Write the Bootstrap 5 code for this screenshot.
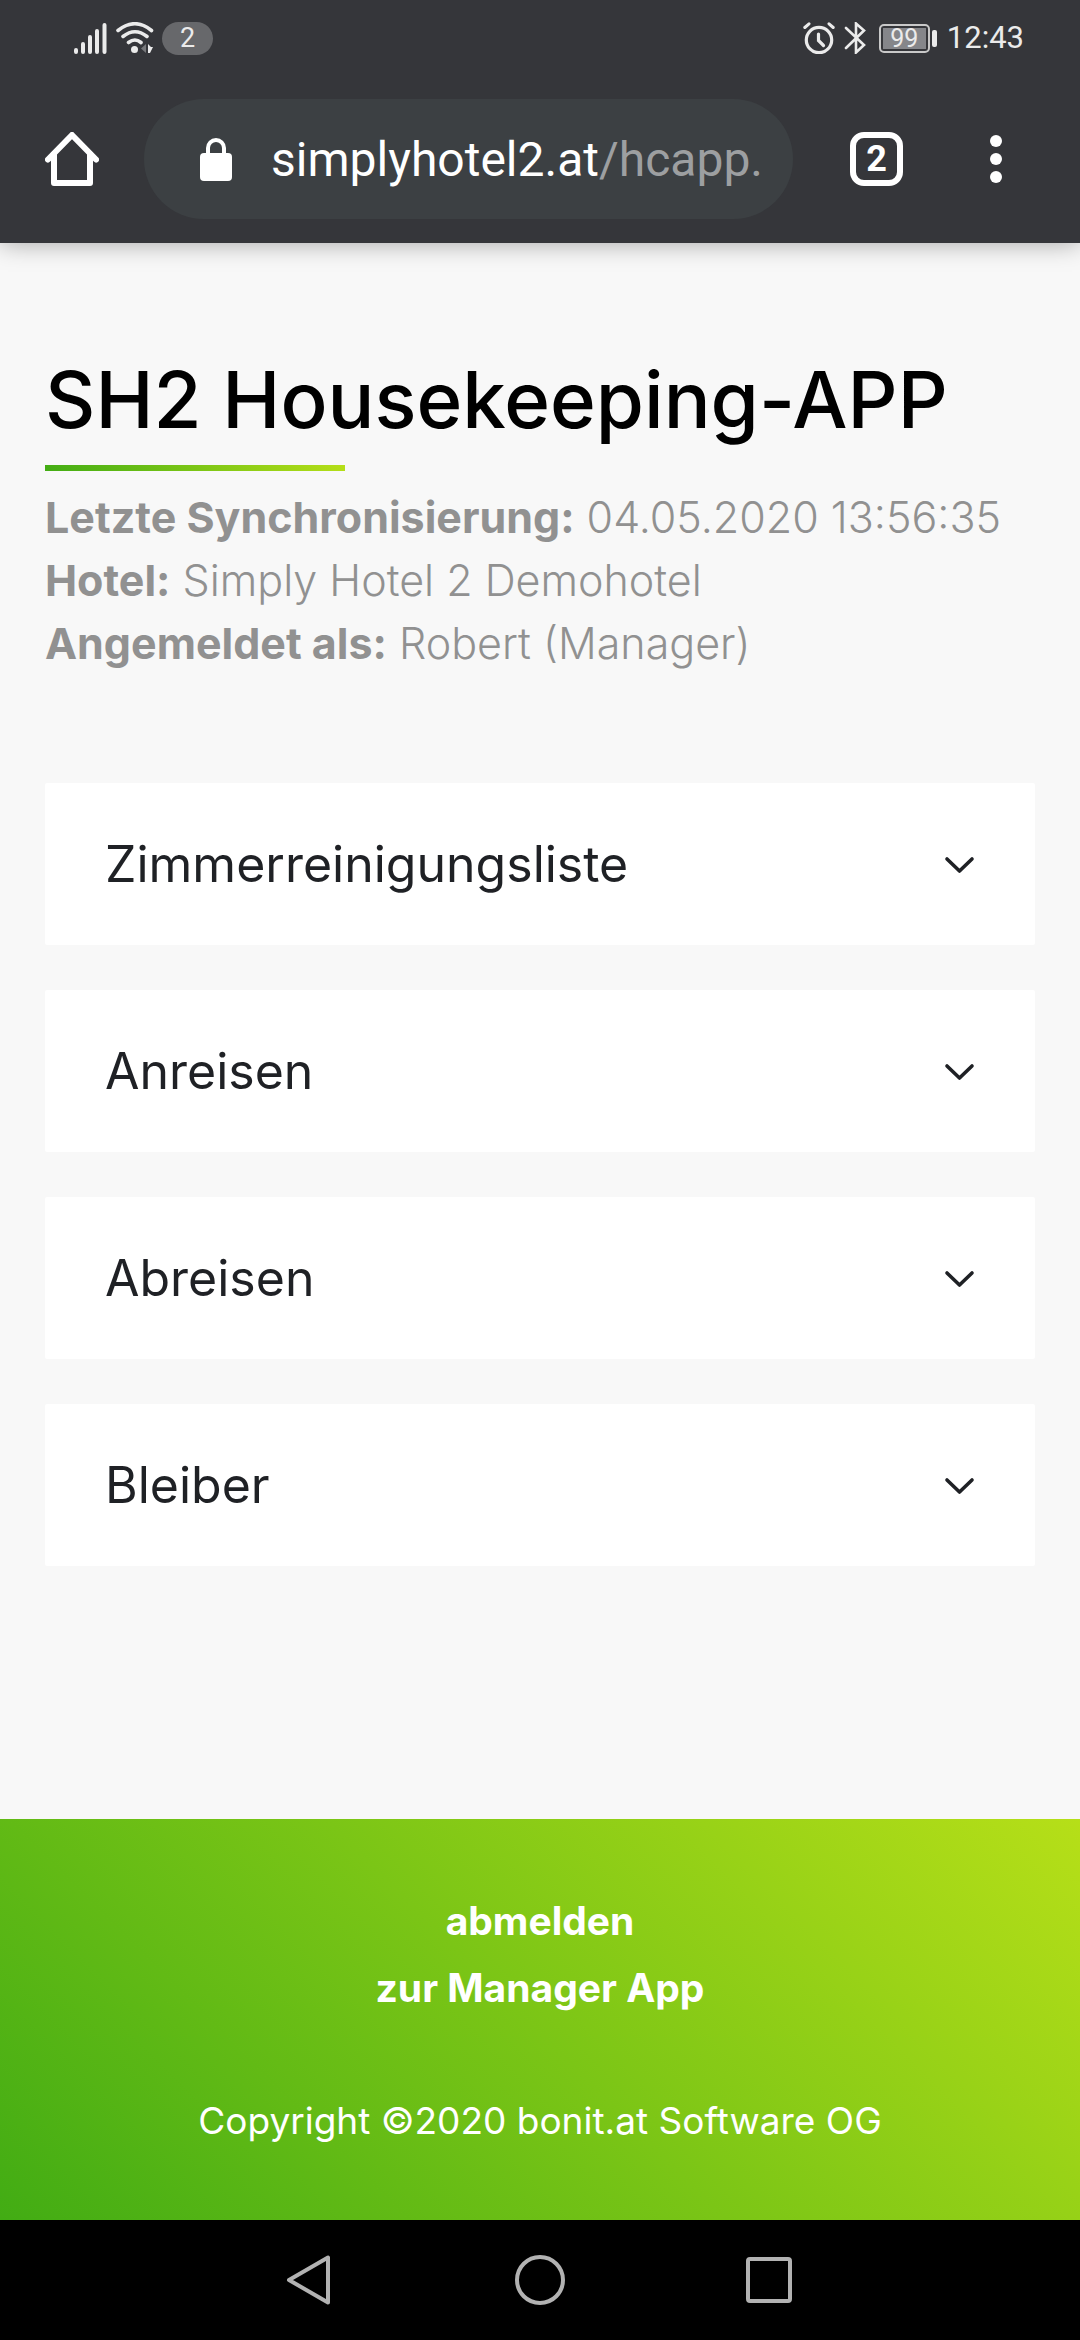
<!DOCTYPE html>
<html lang="de">
<head>
<meta charset="utf-8">
<meta name="viewport" content="width=device-width, initial-scale=1">
<title>SH2 Housekeeping-APP</title>
<link rel="stylesheet" href="https://cdn.jsdelivr.net/npm/bootstrap@5.3.0/dist/css/bootstrap.min.css">
<style>
  body { background: #f8f8f8; font-family: Inter, "Liberation Sans", sans-serif; color: #1f2125; }
  svg { display: block; flex: none; }
  .browser-top { background: #35363a; color: #fff; font-family: Roboto, sans-serif; box-shadow: 0 0 24px rgba(0,0,0,.35); }
  .status-row { height: 76px; padding: 0 56px 0 74px; color: #ebebeb; font-size: 31px; line-height: 32px; }
  .notice-count { width: 51px; height: 33px; line-height: 33px; background: #67686b; font-size: 27px; }
  .battery { width: 51px; height: 29px; border: 2px solid #c9c9c9; border-radius: 5px; padding: 2px; }
  .battery span { background: #85868a; font-size: 25px; line-height: 21px; height: 21px; }
  .battery-tip { width: 5px; height: 17px; background: #ebebeb; border-radius: 2px; margin: 0 10px 0 2px; }
  .tool-row { padding: 23px 45px 24px; }
  .plain-btn { border: 0; background: none; padding: 0; color: inherit; }
  .address { height: 120px; background: #3c4043; font-size: 48px; line-height: 56px; padding: 2px 30px 0 56px; gap: 39px; margin: 0 57px 0 45px; }
  .address .path { color: #9d9fa1; }
  .tab-count { width: 54px; height: 54px; border: 6px solid #fff; border-radius: 14px; font-size: 36px; font-weight: 700; line-height: 42px; }
  .menu-btn { margin-left: 87px; width: 12px; margin-right: 33px; }
  .page { padding: 109px 45px 0; }
  .page-title { font-size: 78px; line-height: 96px; font-weight: 500; color: #000; margin: 0; }
  .title-rule { width: 300px; height: 6px; margin: 17px 0 15px; background: linear-gradient(45deg, #42ac14, #b6df18); }
  .info { font-size: 43px; line-height: 63px; font-weight: 300; color: #919191; margin-bottom: 108px; }
  .info strong { font-weight: 700; }
  .panels { gap: 45px; }
  .panel-btn { width: 100%; height: 162px; background: #fff; border: 0; border-radius: 2px; padding: 0 60px; font-size: 50px; color: #1f2125; }
  .page-foot { background: linear-gradient(45deg, #42ac14, #b6df18); color: #fff; font-size: 37px; line-height: 66px; padding: 69px 45px 66px; }
  .page-foot a { color: #fff; font-weight: 700; font-size: 39px; text-decoration: none; }
  .copyright { margin-top: 66px; }
  .system-nav { background: #000; height: 120px; gap: 180px; }
</style>
<script src="https://cdn.jsdelivr.net/npm/bootstrap@5.3.0/dist/js/bootstrap.bundle.min.js"></script>
</head>
<body class="d-flex flex-column min-vh-100">

<header class="browser-top">
  <div class="status-row d-flex align-items-center justify-content-between">
    <div class="d-flex align-items-center gap-2">
      <svg width="34" height="32" viewBox="0 0 34 32" stroke="#ebebeb" stroke-width="4" stroke-linecap="round"><path d="M2 28v2M9 22v8M16 15v15M23 9v21M30.500 3v27"/></svg>
      <svg width="38" height="32" viewBox="0 0 38 32" fill="none" stroke="#ebebeb" stroke-width="3.600" stroke-linecap="round"><path d="M2 8.500Q19-5 35.500 8.500M7 14.500Q19 5 31 14.500M12.500 20.500Q19 15.500 25 20.500"/><circle cx="18.500" cy="27.500" r="3.500" fill="#ebebeb" stroke="none"/><path d="M30 22v9l-5-4.500z" fill="#77787b" stroke="none"/><path d="M32 22v9h2l3-6h-2z" fill="#ebebeb" stroke="none"/></svg>
      <span class="notice-count rounded-pill text-center">2</span>
    </div>
    <div class="d-flex align-items-center">
      <svg width="32" height="32" viewBox="0 0 32 32" fill="none" stroke="#ebebeb" stroke-linecap="round"><circle cx="16" cy="18" r="12.700" stroke-width="3.200"/><path d="M1.800 5.500L6 1.800M30.200 5.500L26 1.800" stroke-width="3"/><path d="M15.500 12v6.500l5 5" stroke-width="3.200"/></svg>
      <svg class="ms-2 me-2" width="28" height="32" viewBox="0 0 24 32" fill="none" stroke="#ebebeb" stroke-width="2.600" stroke-linecap="round"><path d="M1 6l18 17-8 7.500v-29L19 8.500 1 26"/></svg>
      <div class="battery"><span class="d-block text-center">99</span></div>
      <div class="battery-tip"></div>
      <span>12:43</span>
    </div>
  </div>
  <div class="tool-row d-flex align-items-center">
    <button class="plain-btn" type="button" aria-label="Startseite"><svg width="54" height="54" viewBox="0 0 54 54" fill="none" stroke="#fff" stroke-width="6" stroke-linecap="round" stroke-linejoin="round"><path d="M3 27.500L27 3l24 24.500M9 22v29h36V22"/></svg></button>
    <button class="plain-btn address rounded-pill d-flex align-items-center flex-grow-1" type="button">
      <svg width="32" height="44" viewBox="0 0 32 44"><rect y="15" width="32" height="28" rx="4" fill="#fff"/><path d="M8 17v-7a8 8 0 0 1 16 0v7" fill="none" stroke="#fff" stroke-width="4"/></svg>
      <span class="text-nowrap">simplyhotel2.at<span class="path">/hcapp.</span></span>
    </button>
    <button class="plain-btn tab-count" type="button">2</button>
    <button class="plain-btn menu-btn" type="button" aria-label="Menü"><svg width="12" height="48" viewBox="0 0 12 48" fill="#fff"><circle cx="6" cy="6" r="6"/><circle cx="6" cy="24" r="6"/><circle cx="6" cy="42" r="6"/></svg></button>
  </div>
</header>

<main class="page flex-grow-1">
  <h1 class="page-title">SH2 Housekeeping-APP</h1>
  <div class="title-rule"></div>
  <div class="info">
    <div><strong>Letzte Synchronisierung:</strong> 04.05.2020 13:56:35</div>
    <div><strong>Hotel:</strong> Simply Hotel 2 Demohotel</div>
    <div><strong>Angemeldet als:</strong> Robert (Manager)</div>
  </div>
  <div class="panels d-flex flex-column">
    <button class="panel-btn d-flex align-items-center justify-content-between" type="button" aria-expanded="false"><span>Zimmerreinigungsliste</span><svg width="32" height="20" viewBox="0 0 32 20" fill="none" stroke="#1f2125" stroke-width="3.600" stroke-linecap="round" stroke-linejoin="round"><path d="M4 5l12.500 12L29 5"/></svg></button>
    <button class="panel-btn d-flex align-items-center justify-content-between" type="button" aria-expanded="false"><span>Anreisen</span><svg width="32" height="20" viewBox="0 0 32 20" fill="none" stroke="#1f2125" stroke-width="3.600" stroke-linecap="round" stroke-linejoin="round"><path d="M4 5l12.500 12L29 5"/></svg></button>
    <button class="panel-btn d-flex align-items-center justify-content-between" type="button" aria-expanded="false"><span>Abreisen</span><svg width="32" height="20" viewBox="0 0 32 20" fill="none" stroke="#1f2125" stroke-width="3.600" stroke-linecap="round" stroke-linejoin="round"><path d="M4 5l12.500 12L29 5"/></svg></button>
    <button class="panel-btn d-flex align-items-center justify-content-between" type="button" aria-expanded="false"><span>Bleiber</span><svg width="32" height="20" viewBox="0 0 32 20" fill="none" stroke="#1f2125" stroke-width="3.600" stroke-linecap="round" stroke-linejoin="round"><path d="M4 5l12.500 12L29 5"/></svg></button>
  </div>
</main>

<footer class="page-foot text-center">
  <div><a href="#">abmelden</a></div>
  <div><a href="#">zur Manager App</a></div>
  <div class="copyright">Copyright ©2020 bonit.at Software OG</div>
</footer>

<nav class="system-nav d-flex align-items-center justify-content-center" aria-label="System">
  <button class="plain-btn" type="button" aria-label="Zurück"><svg width="50" height="50" viewBox="0 0 50 50" fill="none" stroke="#b2b2b2" stroke-width="4" stroke-linejoin="round"><path d="M43 2.500v45L4 25z"/></svg></button>
  <button class="plain-btn" type="button" aria-label="Home"><svg width="50" height="50" viewBox="0 0 50 50" fill="none" stroke="#b2b2b2" stroke-width="4"><circle cx="25" cy="25" r="23"/></svg></button>
  <button class="plain-btn" type="button" aria-label="Übersicht"><svg width="50" height="50" viewBox="0 0 50 50" fill="none" stroke="#b2b2b2" stroke-width="4"><rect x="3" y="4" width="42" height="42" rx="2"/></svg></button>
</nav>
</body>
</html>
